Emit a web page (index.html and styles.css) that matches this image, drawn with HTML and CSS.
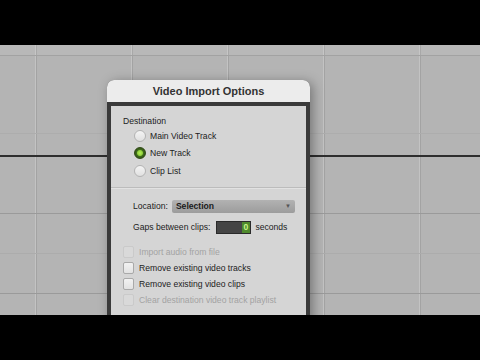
FILE: index.html
```html
<!DOCTYPE html>
<html lang="en">
<head>
    <meta charset="UTF-8">
    <meta name="viewport" content="width=device-width, initial-scale=1.0">
    <title>Video Import Options</title>
    <link rel="stylesheet" href="styles.css">
</head>
<body>
    <div class="screen">
        <div class="letterbox"></div>

        <div class="timeline">
            <div class="ruler"></div>
            <div class="lane lane-a"></div>
            <div class="lane lane-b"></div>
            <div class="lane-edge"></div>
            <div class="lane lane-c"></div>
            <div class="lane lane-d"></div>
            <div class="lane lane-e"></div>
            <div class="lane lane-f"></div>

            <!-- dialog floats over the edit window -->
            <div class="dialog">
                <div class="dialog-title">Video Import Options</div>
                <div class="dialog-body">
                    <div class="section">
                        <div class="group-label">Destination</div>
                        <div class="radio-list">
                            <div class="radio-row"><span class="radio"></span>Main Video Track</div>
                            <div class="radio-row"><span class="radio checked"></span>New Track</div>
                            <div class="radio-row"><span class="radio"></span>Clip List</div>
                        </div>
                    </div>

                    <div class="separator"></div>

                    <div class="section fields">
                        <div class="field-row">
                            <span class="field-label loc-label">Location:</span>
                            <div class="select">
                                <span>Selection</span>
                                <span class="select-arrow">&#9660;</span>
                            </div>
                        </div>
                        <div class="field-row gaps-row">
                            <span class="field-label gaps-label">Gaps between clips:</span>
                            <div class="counter"><span class="counter-value">0</span></div>
                            <span class="unit">seconds</span>
                        </div>
                    </div>

                    <div class="section checks">
                        <div class="check-row disabled"><span class="checkbox"></span>Import audio from file</div>
                        <div class="check-row"><span class="checkbox"></span>Remove existing video tracks</div>
                        <div class="check-row"><span class="checkbox"></span>Remove existing video clips</div>
                        <div class="check-row disabled"><span class="checkbox"></span>Clear destination video track playlist</div>
                    </div>
                </div>
            </div>
        </div>

        <div class="letterbox"></div>
    </div>
</body>
</html>
```

FILE: styles.css
```css
body {
    margin: 0;
    background-color: #000;
    font-family: "Liberation Sans", Arial, sans-serif;
}

.screen {
    width: 480px;
    height: 360px;
    display: flex;
    flex-direction: column;
    overflow: hidden;
}

.letterbox {
    height: 45px;
    background-color: #000;
    position: relative;
    z-index: 2;
}

.timeline {
    position: relative;
    height: 270px;
    display: flex;
    flex-direction: column;
    background-color: #b4b4b4;
    background-image: linear-gradient(to right, transparent 35px, #c3c3c3 35px, #c3c3c3 36px, #a3a3a3 36px, #a3a3a3 37px, transparent 37px);
    background-size: 96px 100%;
}

.ruler {
    height: 10px;
    border-bottom: 1px solid #a2a2a2;
    background-color: rgba(255, 255, 255, 0.06);
}

.lane {
    border-bottom: 1px solid #a4a4a4;
}

.lane-a {
    height: 77px;
    border-bottom-color: #adadad;
}

.lane-b {
    height: 21px;
    border-bottom: none;
}

.lane-edge {
    height: 2px;
    background-color: #2e2e2e;
}

.lane-c {
    height: 56px;
    border-bottom-color: #9a9a9a;
}

.lane-d {
    height: 39px;
    border-bottom-color: #acacac;
}

.lane-e {
    height: 39px;
    border-bottom-color: #9a9a9a;
}

.lane-f {
    flex: 1;
    border-bottom: none;
}

.dialog {
    position: absolute;
    left: 107px;
    top: 35px;
    width: 203px;
    height: 260px;
    background-color: #3a3a3a;
    border-radius: 7px 7px 0 0;
    box-shadow: 3px 2px 12px rgba(0, 0, 0, 0.35);
    display: flex;
    flex-direction: column;
}

.dialog-title {
    height: 22px;
    line-height: 22px;
    text-align: center;
    font-size: 11px;
    font-weight: bold;
    color: #333;
    background-color: #ececec;
    border-radius: 7px 7px 0 0;
}

.dialog-body {
    flex: 1;
    margin: 4px 4px 0 4px;
    background-color: #d5d5d5;
    font-size: 8.6px;
    color: #1c1c1c;
}

.section {
    padding-left: 12px;
}

.group-label {
    padding-top: 10px;
    line-height: 11px;
}

.radio-list {
    padding-left: 11px;
}

.radio-row {
    height: 17.5px;
    display: flex;
    align-items: center;
    gap: 4px;
}

.radio {
    width: 10px;
    height: 10px;
    border-radius: 50%;
    border: 1px solid #b3b3b3;
    background: linear-gradient(#f4f4f4, #e0e0e0);
}

.radio.checked {
    border-color: #2f4a14;
    background: radial-gradient(circle, #b9ee5a 0, #8fd13a 2.5px, #3f6a1c 3.5px, #35561a 5px);
}

.separator {
    margin-top: 7px;
    height: 1px;
    background-color: #bcbcbc;
    border-bottom: 1px solid #e2e2e2;
}

.fields {
    padding-left: 22px;
    padding-top: 11px;
}

.field-row {
    height: 13px;
    display: flex;
    align-items: center;
}

.gaps-row {
    margin-top: 8px;
}

.loc-label {
    margin-right: 4px;
}

.gaps-label {
    margin-right: 6px;
}

.select {
    width: 123px;
    height: 13px;
    box-sizing: border-box;
    padding: 0 4px;
    display: flex;
    align-items: center;
    justify-content: space-between;
    border-radius: 2px;
    background: linear-gradient(#b2b2b2, #9c9c9c);
    color: #1a1a1a;
    font-weight: bold;
}

.select-arrow {
    font-size: 6px;
    color: #555;
}

.counter {
    width: 35px;
    height: 13px;
    box-sizing: border-box;
    border: 1px solid #2a2a2a;
    background-color: #454545;
    display: flex;
    justify-content: flex-end;
    align-items: center;
}

.counter-value {
    height: 11px;
    line-height: 11px;
    padding: 0 2px;
    background-color: #4f8a2c;
    color: #c8f58a;
    font-weight: bold;
}

.unit {
    margin-left: 4px;
}

.checks {
    padding-top: 10px;
}

.check-row {
    height: 16px;
    display: flex;
    align-items: center;
    gap: 5px;
}

.checkbox {
    width: 9px;
    height: 10px;
    border: 1px solid #a9a9a9;
    border-radius: 2px;
    background: linear-gradient(#f2f2f2, #e2e2e2);
}

.check-row.disabled {
    color: #a3a3a3;
}

.check-row.disabled .checkbox {
    border-color: #cacaca;
    background: #d9d9d9;
}
```
